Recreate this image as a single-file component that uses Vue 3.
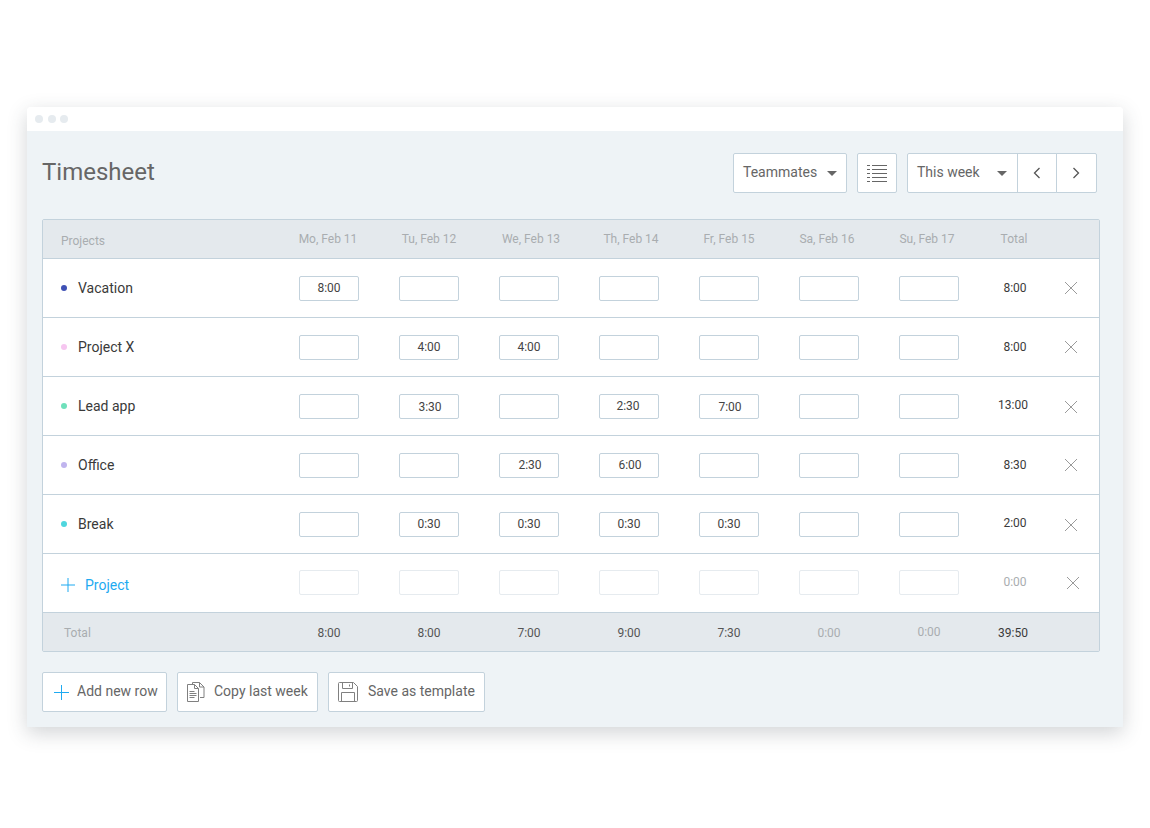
<script setup>
// the reference's labels sit a pixel or two off their columns, so each carries its own offset
const days = [
  { label: "Mo, Feb 11", dx: -1 },
  { label: "Tu, Feb 12", dx: 0 },
  { label: "We, Feb 13", dx: 2 },
  { label: "Th, Feb 14", dx: 2 },
  { label: "Fr, Feb 15", dx: 0 },
  { label: "Sa, Feb 16", dx: -2 },
  { label: "Su, Feb 17", dx: -2 },
];

const rows = [
  {
    name: "Vacation",
    color: "#3f51b5",
    hours: ["8:00", "", "", "", "", "", ""],
    total: "8:00",
    totalShift: [1, 0],
    closeDy: 0,
  },
  {
    name: "Project X",
    color: "#f6c6f0",
    hours: ["", "4:00", "4:00", "", "", "", ""],
    total: "8:00",
    totalShift: [1, 0],
    closeDy: 0,
  },
  {
    name: "Lead app",
    color: "#6fe0bb",
    hours: ["", "3:30", "", "2:30", "7:00", "", ""],
    shifts: { 1: [1, 1], 3: [-1, 0], 4: [1, 1] },
    total: "13:00",
    totalShift: [-1, -1],
    closeDy: 1,
  },
  {
    name: "Office",
    color: "#c0b4ee",
    hours: ["", "", "2:30", "6:00", "", "", ""],
    shifts: { 2: [1, 0], 3: [1, 0] },
    total: "8:30",
    totalShift: [1, 0],
    closeDy: 0,
  },
  {
    name: "Break",
    color: "#4fd6de",
    hours: ["", "0:30", "0:30", "0:30", "0:30", "", ""],
    total: "2:00",
    totalShift: [1, -1],
    closeDy: 1,
  },
];

const totals = [
  { value: "8:00", dx: 0, dy: 0 },
  { value: "8:00", dx: 0, dy: 0 },
  { value: "7:00", dx: 0, dy: 0 },
  { value: "9:00", dx: 0, dy: 0 },
  { value: "7:30", dx: 0, dy: 0 },
  { value: "0:00", dx: 0, dy: 0 },
  { value: "0:00", dx: 0, dy: -1 },
];

const shift = (dx = 0, dy = 0) => ({ transform: `translate(${dx}px, ${dy}px)` });
const hourShift = (row, i) => {
  const s = row.shifts && row.shifts[i];
  return s ? shift(s[0], s[1]) : null;
};
</script>

<template>
  <div class="page">
    <div class="window">
      <div class="titlebar">
        <span class="light"></span>
        <span class="light"></span>
        <span class="light"></span>
      </div>

      <div class="body">
        <div class="head">
          <h1 class="title">Timesheet</h1>
          <div class="tools">
            <div class="btn select teammates">
              <span class="select-label">Teammates</span>
              <i class="caret"></i>
            </div>
            <div class="btn square">
              <svg width="20" height="17" viewBox="0 0 20 17" fill="none" stroke="#666" stroke-width="1">
                <path d="M0 .5h3M5 .5h15M0 4.5h3M5 4.5h15M0 8.5h3M5 8.5h15M0 12.5h3M5 12.5h15M0 16.5h3M5 16.5h15" />
              </svg>
            </div>
            <div class="group">
              <div class="btn select week">
                <span class="select-label">This week</span>
                <i class="caret"></i>
              </div>
              <div class="btn nav">
                <svg width="9" height="12" viewBox="0 0 9 12" fill="none" stroke="#555" stroke-width="1.3">
                  <path d="M6.5 1 1.5 6l5 5" />
                </svg>
              </div>
              <div class="btn nav">
                <svg width="9" height="12" viewBox="0 0 9 12" fill="none" stroke="#555" stroke-width="1.3">
                  <path d="m1.5 1 5 5-5 5" />
                </svg>
              </div>
            </div>
          </div>
        </div>

        <div class="table">
          <div class="row row--head">
            <div class="first first--head">Projects</div>
            <div v-for="d in days" :key="d.label" class="cell">
              <span :style="shift(d.dx)">{{ d.label }}</span>
            </div>
            <div class="cell">Total</div>
            <div></div>
          </div>

          <div v-for="r in rows" :key="r.name" class="row row--body">
            <div class="first">
              <i class="dot" :style="{ background: r.color }"></i>
              <span class="name">{{ r.name }}</span>
            </div>
            <div v-for="(h, i) in r.hours" :key="i" class="cell">
              <div class="input">
                <span v-if="h" class="val" :style="hourShift(r, i)">{{ h }}</span>
              </div>
            </div>
            <div class="cell sum">
              <span :style="shift(r.totalShift[0], r.totalShift[1])">{{ r.total }}</span>
            </div>
            <div class="remove">
              <svg :style="shift(0, r.closeDy)" width="14" height="14" viewBox="0 0 14 14" stroke="#9a9a9a" stroke-width="1">
                <path d="M1 1l12 12M13 1 1 13" />
              </svg>
            </div>
          </div>

          <div class="row row--body">
            <div class="first first--add">
              <svg width="14" height="14" viewBox="0 0 14 14" stroke="#1eaaf1" stroke-width="1">
                <path d="M7 0v14M0 7h14" />
              </svg>
              <span class="add-label">Project</span>
            </div>
            <div v-for="d in days" :key="d.label" class="cell">
              <div class="input input--off"></div>
            </div>
            <div class="cell sum sum--off">
              <span :style="shift(1, -1)">0:00</span>
            </div>
            <div class="remove">
              <svg :style="shift(2, 0)" width="14" height="14" viewBox="0 0 14 14" stroke="#9a9a9a" stroke-width="1">
                <path d="M1 1l12 12M13 1 1 13" />
              </svg>
            </div>
          </div>

          <div class="row row--foot">
            <div class="first first--foot">Total</div>
            <div
              v-for="(t, i) in totals"
              :key="i"
              class="cell foot-val"
              :class="{ 'foot-val--off': t.value === '0:00' }"
            >
              <span :style="shift(t.dx, t.dy)">{{ t.value }}</span>
            </div>
            <div class="cell foot-val foot-val--sum">
              <span :style="shift(-1, 0)">39:50</span>
            </div>
            <div></div>
          </div>
        </div>

        <div class="actions">
          <div class="btn action action--add">
            <svg width="15" height="15" viewBox="0 0 15 15" stroke="#1eaaf1" stroke-width="1">
              <path d="M7.5 0v15M0 7.5h15" />
            </svg>
            <span>Add new row</span>
          </div>
          <div class="btn action action--copy">
            <svg width="18" height="20" viewBox="0 0 18 20" fill="none" stroke="#808080" stroke-width="1">
              <path d="M5.5 2.5v-2h7l4.5 4.5v10.500h-4" />
              <path d="M12.500 .5v4.500H17" />
              <path d="M.5 2.500h7l4 4v13H.5z" fill="#fff" />
              <path d="M7.500 2.500v4h4M2.500 9.500h5M2.500 11.500h7M2.500 13.500h7M2.500 15.500h5" />
            </svg>
            <span>Copy last week</span>
          </div>
          <div class="btn action action--save">
            <svg width="20" height="20" viewBox="0 0 20 20" fill="none" stroke="#808080" stroke-width="1">
              <path d="M.5 1.500a1 1 0 0 1 1-1h14l4 4v14a1 1 0 0 1-1 1h-17a1 1 0 0 1-1-1z" />
              <path d="M4.500 .5v6h10v-6M11.500 2.500v2M3.500 19.500v-9h13v9" />
            </svg>
            <span>Save as template</span>
          </div>
        </div>
      </div>
    </div>
  </div>
</template>

<style>
body {
  background: #fff;
}
</style>

<style scoped>
.page {
  box-sizing: border-box;
  min-height: 828px;
  padding: 107px 27px 0;
  font-family: Roboto, "Liberation Sans", sans-serif;
  color: #333;
}

.window {
  width: 1096px;
  height: 620px;
  border-radius: 4px 4px 0 0;
  overflow: hidden;
  display: flex;
  flex-direction: column;
  box-shadow: 0 6px 20px rgba(50, 60, 70, 0.22);
}

.titlebar {
  height: 24px;
  flex: none;
  background: #fff;
  display: flex;
  align-items: center;
  gap: 4.5px;
  padding-left: 8px;
}

.light {
  width: 8px;
  height: 8px;
  border-radius: 50%;
  background: #e6ebef;
}

.body {
  flex: 1;
  background: #eef3f6;
  padding: 22px 23px 0 15px;
}

.head {
  display: flex;
  justify-content: space-between;
  align-items: center;
  height: 40px;
  padding-right: 3px;
}

.title {
  margin: 0 0 2px;
  font-size: 24px;
  font-weight: 400;
  color: #666;
  line-height: 38px;
}

.tools {
  display: flex;
  gap: 10px;
}

.btn {
  height: 40px;
  box-sizing: border-box;
  background: #fff;
  border: 1px solid #c3d2dc;
  border-radius: 2px;
  display: flex;
  align-items: center;
  font-size: 14px;
  color: #666;
}

.btn svg {
  flex: none;
}

.select {
  justify-content: space-between;
  padding: 0 9px;
}

.select-label {
  margin-bottom: 2px;
}

.teammates {
  width: 114px;
}

.square {
  width: 40px;
  justify-content: center;
}

.group {
  display: flex;
}

.week {
  width: 111px;
  padding-right: 10px;
  border-radius: 2px 0 0 2px;
}

.nav {
  width: 40px;
  margin-left: -1px;
  justify-content: center;
  border-radius: 0;
}

.nav:last-child {
  width: 41px;
  border-radius: 0 2px 2px 0;
}

.caret {
  width: 0;
  height: 0;
  border-left: 5px solid transparent;
  border-right: 5px solid transparent;
  border-top: 5px solid #666;
}

.table {
  margin-top: 26px;
  width: 1058px;
  box-sizing: border-box;
  border: 1px solid #c3d2dc;
  border-radius: 2px;
  overflow: hidden;
}

.row {
  display: grid;
  grid-template-columns: 236px repeat(7, 100px) 70px 1fr;
  align-items: center;
  box-sizing: border-box;
}

.row--head {
  height: 39px;
  background: #e4e9ed;
  border-bottom: 1px solid #c3d2dc;
  font-size: 12px;
  color: #a9adb0;
}

.row--body {
  height: 59px;
  background: #fff;
  border-bottom: 1px solid #c3d2dc;
}

.row--foot {
  height: 38px;
  padding-top: 2px;
  background: #e4e9ed;
  font-size: 12px;
}

.first {
  display: flex;
  align-items: center;
  padding-left: 18px;
}

.first--head {
  padding-top: 3px;
}

.first--foot {
  padding-left: 21px;
  color: #a9adb0;
}

.first--add {
  gap: 10px;
  margin-top: 4px;
}

.cell {
  display: flex;
  justify-content: center;
  text-align: center;
}

.cell span {
  display: block;
}

.dot {
  width: 6px;
  height: 6px;
  border-radius: 50%;
  margin-right: 11px;
}

.name {
  font-size: 14px;
  color: #3a3a3a;
}

.add-label {
  font-size: 14px;
  color: #1eaaf1;
}

.input {
  width: 60px;
  height: 25px;
  box-sizing: border-box;
  border: 1px solid #c3d2dc;
  border-radius: 2px;
  font-size: 12px;
  line-height: 23px;
  color: #444;
  text-align: center;
}

.val {
  display: block;
}

.input--off {
  border-color: #e6ebef;
  margin-bottom: 2px;
}

.sum {
  font-size: 12px;
  color: #3a3a3a;
}

.sum--off {
  color: #a9adb0;
}

.remove {
  display: flex;
  padding-left: 15px;
}

.foot-val {
  color: #555;
}

.foot-val--off {
  color: #a9adb0;
}

.foot-val--sum {
  color: #3a3a3a;
}

.actions {
  display: flex;
  gap: 10px;
  margin-top: 20px;
}

.action {
  gap: 9px;
  padding: 0 9px;
}

.action span {
  margin-bottom: 2px;
  white-space: nowrap;
}

.action--add {
  width: 125px;
  gap: 8px;
  padding: 0 0 0 11px;
}

.action--copy {
  width: 141px;
}

.action--save {
  width: 157px;
  gap: 10px;
}
</style>
